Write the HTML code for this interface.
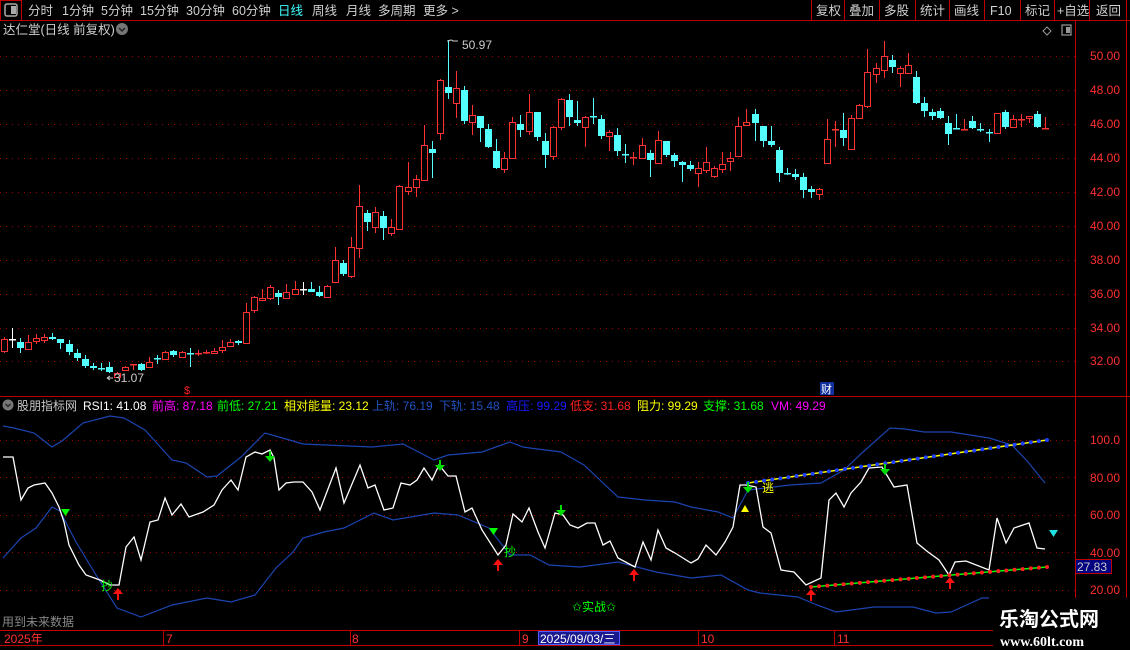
<!DOCTYPE html>
<html><head><meta charset="utf-8">
<style>
html,body{margin:0;padding:0;background:#000;width:1130px;height:650px;overflow:hidden;}
body{font-family:"Liberation Sans","Noto Sans CJK SC",sans-serif;}
svg text{font-family:"Liberation Sans","Noto Sans CJK SC",sans-serif;}
</style></head>
<body>
<svg id="s" width="1130" height="650" xmlns="http://www.w3.org/2000/svg" style="position:absolute;left:0;top:0">
<rect width="1130" height="650" fill="#000"/>
<!-- top bar -->
<g stroke="#c00000" stroke-width="1" fill="none">
<line x1="0" y1="20.5" x2="1130" y2="20.5"/>
<rect x="0.5" y="0.5" width="21" height="20"/>
<line x1="811.5" y1="0" x2="811.5" y2="20"/><line x1="844.5" y1="0" x2="844.5" y2="20"/>
<line x1="879.5" y1="0" x2="879.5" y2="20"/><line x1="915.5" y1="0" x2="915.5" y2="20"/>
<line x1="949.5" y1="0" x2="949.5" y2="20"/><line x1="984.5" y1="0" x2="984.5" y2="20"/>
<line x1="1020.5" y1="0" x2="1020.5" y2="20"/><line x1="1054.5" y1="0" x2="1054.5" y2="20"/>
<line x1="1089.5" y1="0" x2="1089.5" y2="20"/><line x1="1126.5" y1="0" x2="1126.5" y2="20"/>
<line x1="1075.5" y1="20" x2="1075.5" y2="630"/>
<line x1="1126.5" y1="20" x2="1126.5" y2="630"/>
<line x1="0" y1="396.5" x2="1130" y2="396.5"/>
<line x1="0" y1="630.5" x2="1130" y2="630.5"/>
<line x1="0" y1="645.5" x2="1000" y2="645.5"/>
</g>
<rect x="5" y="4" width="12" height="12" rx="2" fill="none" stroke="#aaa" stroke-width="1.5"/>
<rect x="11" y="6" width="5" height="8" fill="#aaa"/>
<g font-size="12.5" fill="#d0d0d0">
<text x="28" y="15">分时</text><text x="62" y="15">1分钟</text><text x="101" y="15">5分钟</text>
<text x="140" y="15">15分钟</text><text x="186" y="15">30分钟</text><text x="232" y="15">60分钟</text>
<text x="278" y="15" fill="#40ffff">日线</text><text x="312" y="15">周线</text><text x="346" y="15">月线</text>
<text x="378" y="15">多周期</text><text x="423" y="15">更多 &gt;</text>
<text x="816" y="15">复权</text><text x="849" y="15">叠加</text><text x="884" y="15">多股</text>
<text x="920" y="15">统计</text><text x="954" y="15">画线</text><text x="990" y="15">F10</text>
<text x="1025" y="15">标记</text><text x="1057" y="15">+自选</text><text x="1096" y="15">返回</text>
</g>
<text x="3" y="34" font-size="12.5" fill="#d0d0d0">达仁堂(日线 前复权)</text>
<circle cx="122" cy="29" r="6" fill="#777"/>
<path d="M119 28 l3 3 l3 -3" stroke="#222" stroke-width="1.5" fill="none"/>
<path d="M1047 27 l4 4 l-4 4 l-4 -4 z" fill="none" stroke="#999"/>
<rect x="1062" y="25" width="9" height="10" fill="none" stroke="#999" stroke-width="1.2"/>
<rect x="1066" y="27" width="4" height="6" fill="#999"/>

<g id="grid" stroke="#b00000" stroke-width="1" stroke-dasharray="1 5"></g>
<g id="candles"></g>

<g font-size="12" fill="#ff3030" id="axis"></g>

<text x="114" y="382" font-size="12" fill="#ccc">31.07</text>
<path d="M113 378 l-6 0 M107 378 l3 -2 M107 378 l3 2" stroke="#ccc" fill="none"/>
<path d="M448 40 l0 2 M449 41 q2 -2 4 0 l5 0" stroke="#ccc" fill="none"/>
<text x="462" y="49" font-size="12" fill="#ccc">50.97</text>
<text x="184" y="394" font-size="11" fill="#ff2020">$</text>
<rect x="820" y="382" width="14" height="13" fill="#1030a0"/>
<text x="821" y="393" font-size="11" fill="#fff">财</text>

<!-- indicator legend -->
<circle cx="8" cy="405" r="5.5" fill="#777"/>
<path d="M5.5 404 l2.5 2.5 l2.5 -2.5" stroke="#222" stroke-width="1.3" fill="none"/>
<g font-size="12">
<text x="17" y="410" fill="#c8c8c8">股朋指标网</text>
<text x="83" y="410" fill="#fff">RSI1: 41.08</text>
<text x="152" y="410" fill="#ff00ff">前高: 87.18</text>
<text x="217" y="410" fill="#00ff00">前低: 27.21</text>
<text x="284" y="410" fill="#ffff00">相对能量: 23.12</text>
<text x="372" y="410" fill="#2050c0">上轨: 76.19</text>
<text x="439" y="410" fill="#2050c0">下轨: 15.48</text>
<text x="506" y="410" fill="#1a1aff">高压: 99.29</text>
<text x="570" y="410" fill="#ff2020">低支: 31.68</text>
<text x="637" y="410" fill="#ffff00">阻力: 99.29</text>
<text x="703" y="410" fill="#00ff00">支撑: 31.68</text>
<text x="771" y="410" fill="#ff00ff">VM: 49.29</text>
</g>
<g stroke="#b00000" stroke-width="1" stroke-dasharray="1 5">
<line x1="0" y1="440.5" x2="1075" y2="440.5"/><line x1="0" y1="477.5" x2="1075" y2="477.5"/>
<line x1="0" y1="515.5" x2="1075" y2="515.5"/><line x1="0" y1="552.5" x2="1075" y2="552.5"/>
<line x1="0" y1="590.5" x2="1075" y2="590.5"/>
</g>
<g font-size="12" fill="#ff3030">
<text x="1090" y="444">100.0</text><text x="1090" y="482">80.00</text><text x="1090" y="519">60.00</text>
<text x="1090" y="557">40.00</text><text x="1090" y="594">20.00</text>
</g>
<rect x="1075.5" y="559.5" width="36" height="14" fill="#000080" stroke="#c00000"/>
<text x="1077" y="571" font-size="12" fill="#ccc">27.83</text>

<g fill="none" stroke="#1c44b0" stroke-width="1.2">
<polyline points="3,426 14,428 34,433 52,447 62,441 83,423 110,416 124,418 145,430 172,460 186,463 207,477 217,476 241,457 265,433 286,439 303,444 372,447 403,444 434,460 448,455 482,452 510,442 523,447 530,448 561,452 584,465 618,497 645,500 675,502 691,507 718,512 733,518 748,490 790,485 821,483 844,470 863,452 890,428 905,429 924,432 951,432 989,438 1012,445 1028,462 1045,483"/>
<polyline points="3,558 21,538 36,528 52,507 60,511 76,542 96,575 117,608 141,617 172,605 207,598 231,602 255,595 276,568 293,552 303,538 324,532 344,528 374,513 393,520 434,513 458,515 489,528 510,555 530,555 549,565 580,567 618,562 656,572 691,578 721,575 748,590 760,593 798,597 817,605 836,612 874,607 913,607 936,613 951,612 982,598 989,598"/>
</g>
<polyline fill="none" stroke="#fff" stroke-width="1.3" points="3,457 13,457 21,500 28,488 34,485 45,483 52,493 59,507 64,522 69,545 79,565 86,575 100,580 110,585 119,585 126,547 134,537 141,560 150,522 158,520 165,498 172,515 181,504 189,517 203,512 214,505 222,490 231,480 238,490 246,457 255,452 262,454 270,450 274,458 279,490 286,483 294,482 303,482 312,492 320,510 336,468 344,503 360,465 368,488 375,485 384,510 393,508 401,483 410,485 417,480 424,468 432,480 439,465 448,476 456,476 465,512 472,508 482,530 498,555 506,545 513,514 522,522 529,508 538,532 545,548 555,513 563,515 570,525 578,528 587,523 595,523 603,545 610,541 618,558 635,567 643,542 651,560 658,530 666,548 675,553 691,563 698,559 706,545 716,555 725,542 733,527 740,485 746,485 756,487 763,527 771,533 781,570 794,572 806,585 821,578 829,500 836,493 844,507 851,493 861,482 869,468 882,467 894,487 907,485 917,543 928,552 939,560 949,575 955,562 966,561 989,570 997,518 1006,543 1014,528 1029,523 1037,548 1045,549"/>
<line x1="748" y1="483" x2="1047" y2="440" stroke="#ffff00" stroke-width="1.5"/>
<line x1="811" y1="587" x2="1047" y2="567" stroke="#00ff00" stroke-width="1.5"/>
<g id="dots"></g>

<!-- markers -->
<g fill="#00ff00">
<path d="M61 509 h9 l-4.5 7 z"/><path d="M489 528 h9 l-4.5 7 z"/>
<path d="M1049 530 h9 l-4.5 7 z" fill="#20e0e0"/>
</g>
<path d="M741 512 h8 l-4 -7 z" fill="#ffff00"/>
<g fill="#00dd00" id="garrows"></g>
<g fill="#ff1010" id="rarrows"></g>
<g font-size="12" fill="#00ff00">
<text x="101" y="590">抄</text><text x="504" y="556">抄</text>
</g>
<text x="762" y="492" font-size="12" fill="#ffff00">逃</text>
<text x="572" y="611" font-size="12" fill="#00ff00">✩实战✩</text>
<text x="2" y="626" font-size="12" fill="#888">用到未来数据</text>

<!-- bottom date row -->
<g stroke="#c00000"><line x1="163.5" y1="630" x2="163.5" y2="645"/><line x1="350.5" y1="630" x2="350.5" y2="645"/><line x1="519.5" y1="630" x2="519.5" y2="645"/><line x1="698.5" y1="630" x2="698.5" y2="645"/><line x1="834.5" y1="630" x2="834.5" y2="645"/></g>
<g font-size="12" fill="#ff3030">
<text x="4" y="643">2025年</text><text x="166" y="643">7</text><text x="352" y="643">8</text>
<text x="522" y="643">9</text><text x="701" y="643">10</text><text x="837" y="643">11</text>
</g>
<rect x="538.5" y="631.5" width="81" height="13" fill="#1a1a90" stroke="#5060ff"/>
<text x="540" y="643" font-size="12" fill="#fff">2025/09/03/三</text>

<rect x="993" y="598" width="137" height="52" fill="#000"/>
<text x="999" y="626" font-size="20" font-weight="bold" fill="#fff" font-family="'Noto Sans CJK SC',sans-serif">乐淘公式网</text>
<text x="1000" y="646" font-size="14" font-weight="bold" fill="#fff" font-family="'Liberation Serif',serif" style="font-family:'Liberation Serif',serif">www.60lt.com</text>
</svg>
<script>
var NS="http://www.w3.org/2000/svg";
function el(p,t,a){var e=document.createElementNS(NS,t);for(var k in a)e.setAttribute(k,a[k]);document.getElementById(p).appendChild(e);return e;}
var ys=[56,90,124,158,192,226,260,294,328,361],labs=["50.00","48.00","46.00","44.00","42.00","40.00","38.00","36.00","34.00","32.00"];
ys.forEach(function(y,i){el("grid","line",{x1:0,y1:y+.5,x2:1075,y2:y+.5});var t=el("axis","text",{x:1090,y:y+4});t.textContent=labs[i];});
var C=[
"r339 351 337 353","w339 339 328 348","c342 348 338 353","r342 349 335 350","r338 341 334 344","r337 340 334 343","c337 339 333 340","c339 343 339 349","c344 352 340 355","c353 358 349 361",
"c359 366 355 368","c366 368 363 370","c368 369 363 371","c367 372 362 373","r373 377 372 378","r367 370 366 371","r364 365 364 370","c364 370 363 371","r362 367 357 368","c358 359 355 364",
"r352 359 351 360","c351 355 350 357","r352 357 351 358","c353 353 348 367","r353 354 350 356","r352 353 350 354","r351 353 348 354","r347 350 340 353","r342 346 339 347","c341 343 340 345",
"r312 343 303 343","r297 310 296 313","r298 300 289 301","r287 298 285 300","c293 297 290 305","r292 298 284 299","r289 294 281 294","w289 289 282 295","c289 292 282 292","c292 296 286 297",
"r286 297 285 297","r260 282 247 283","c263 274 260 276","r247 276 237 278","r206 248 185 258","c213 222 210 231","r212 227 207 233","c216 228 211 240","r227 233 219 236","r186 229 185 230",
"r187 191 162 195","r179 187 175 197","r145 180 125 181","c149 153 141 178","r80 133 79 140","c87 93 40 99","r88 103 71 118","c90 121 86 124","r115 122 105 135","c116 128 116 142",
"c129 147 124 148","c151 168 139 169","r158 169 152 173","r122 158 117 159","c124 130 115 137","r112 131 94 135","c112 137 112 141","c141 155 133 168","r127 156 126 160","r99 127 98 130",
"c100 117 94 126","c120 123 101 126","r117 127 116 147","c116 116 98 124","c119 136 115 139","r132 136 130 151","c135 151 128 156","c154 154 144 163","r157 158 152 165","r145 158 138 158",
"c153 160 150 177","r140 163 131 163","c141 155 141 157","c155 161 153 167","c162 165 161 182","c165 169 161 171","r168 173 162 187","r162 170 147 173","r168 176 166 178","r164 169 152 173",
"r158 161 152 171","r126 156 117 157","r122 125 109 126","c114 123 109 141","c126 141 126 147","c141 145 126 147","c150 173 147 182","c173 173 168 175","c174 177 169 180","c177 190 173 198",
"c189 192 186 198","r189 194 188 200","r139 163 119 164","r129 129 121 147","c130 138 113 146","r118 149 115 150","r105 118 104 119","r72 106 49 108","r68 74 63 83","r56 70 41 78",
"c60 67 55 73","r68 73 66 87","r65 73 53 74","c77 103 71 104","c103 111 97 117","c112 116 109 120","c111 118 108 119","c123 134 116 145","c128 128 114 129","r129 129 119 130",
"c121 128 116 129","c129 129 123 132","c132 132 129 142","r113 133 113 133","c112 127 110 129","r119 127 115 128","r119 119 114 127","r116 118 116 123","c114 127 111 128","r128 128 117 129"];
C.forEach(function(s,i){var t=s[0],v=s.slice(1).split(" ").map(Number);var x=Math.round(4+i*8.07);
var col=t=="r"?"#ff3232":t=="c"?"#54ffff":"#ffffff";
var top=v[0],bot=v[1],hi=v[2],lo=v[3];
if(t=="r"&&bot-top>1){
el("candles","line",{x1:x+.5,y1:hi,x2:x+.5,y2:top,stroke:col});
el("candles","line",{x1:x+.5,y1:bot,x2:x+.5,y2:lo,stroke:col});
el("candles","rect",{x:x-2.5,y:top+.5,width:6,height:bot-top,fill:"none",stroke:col});
}else{
el("candles","line",{x1:x+.5,y1:hi,x2:x+.5,y2:lo,stroke:col});
el("candles","rect",{x:x-3,y:top,width:7,height:Math.max(bot-top,1.5),fill:col});
}});
for(var i=0;i<=37;i++){var x=748+i*8.08,y=483-43*(x-748)/299;el("dots","circle",{cx:x,cy:y,r:2,fill:"#2040ff"});}
for(var i=0;i<=29;i++){var x=811+i*8.14,y=587-20*(x-811)/236;el("dots","circle",{cx:x,cy:y,r:2,fill:"#ff2020"});}
function garrow(x,y){el("garrows","path",{d:"M"+(x-1)+" "+(y-10)+" h2 v5 h4 l-5 6 l-5 -6 h4 z"});}
[[270,461],[440,470],[561,515],[748,492],[885,474]].forEach(function(p){garrow(p[0],p[1]);});
function rarrow(x,y){el("rarrows","path",{d:"M"+x+" "+(y-6)+" l5 6 h-4 v6 h-2 v-6 h-4 z"});}
[[118,594],[498,565],[634,575],[811,595],[950,583]].forEach(function(p){rarrow(p[0],p[1]);});
</script>
</body></html>
